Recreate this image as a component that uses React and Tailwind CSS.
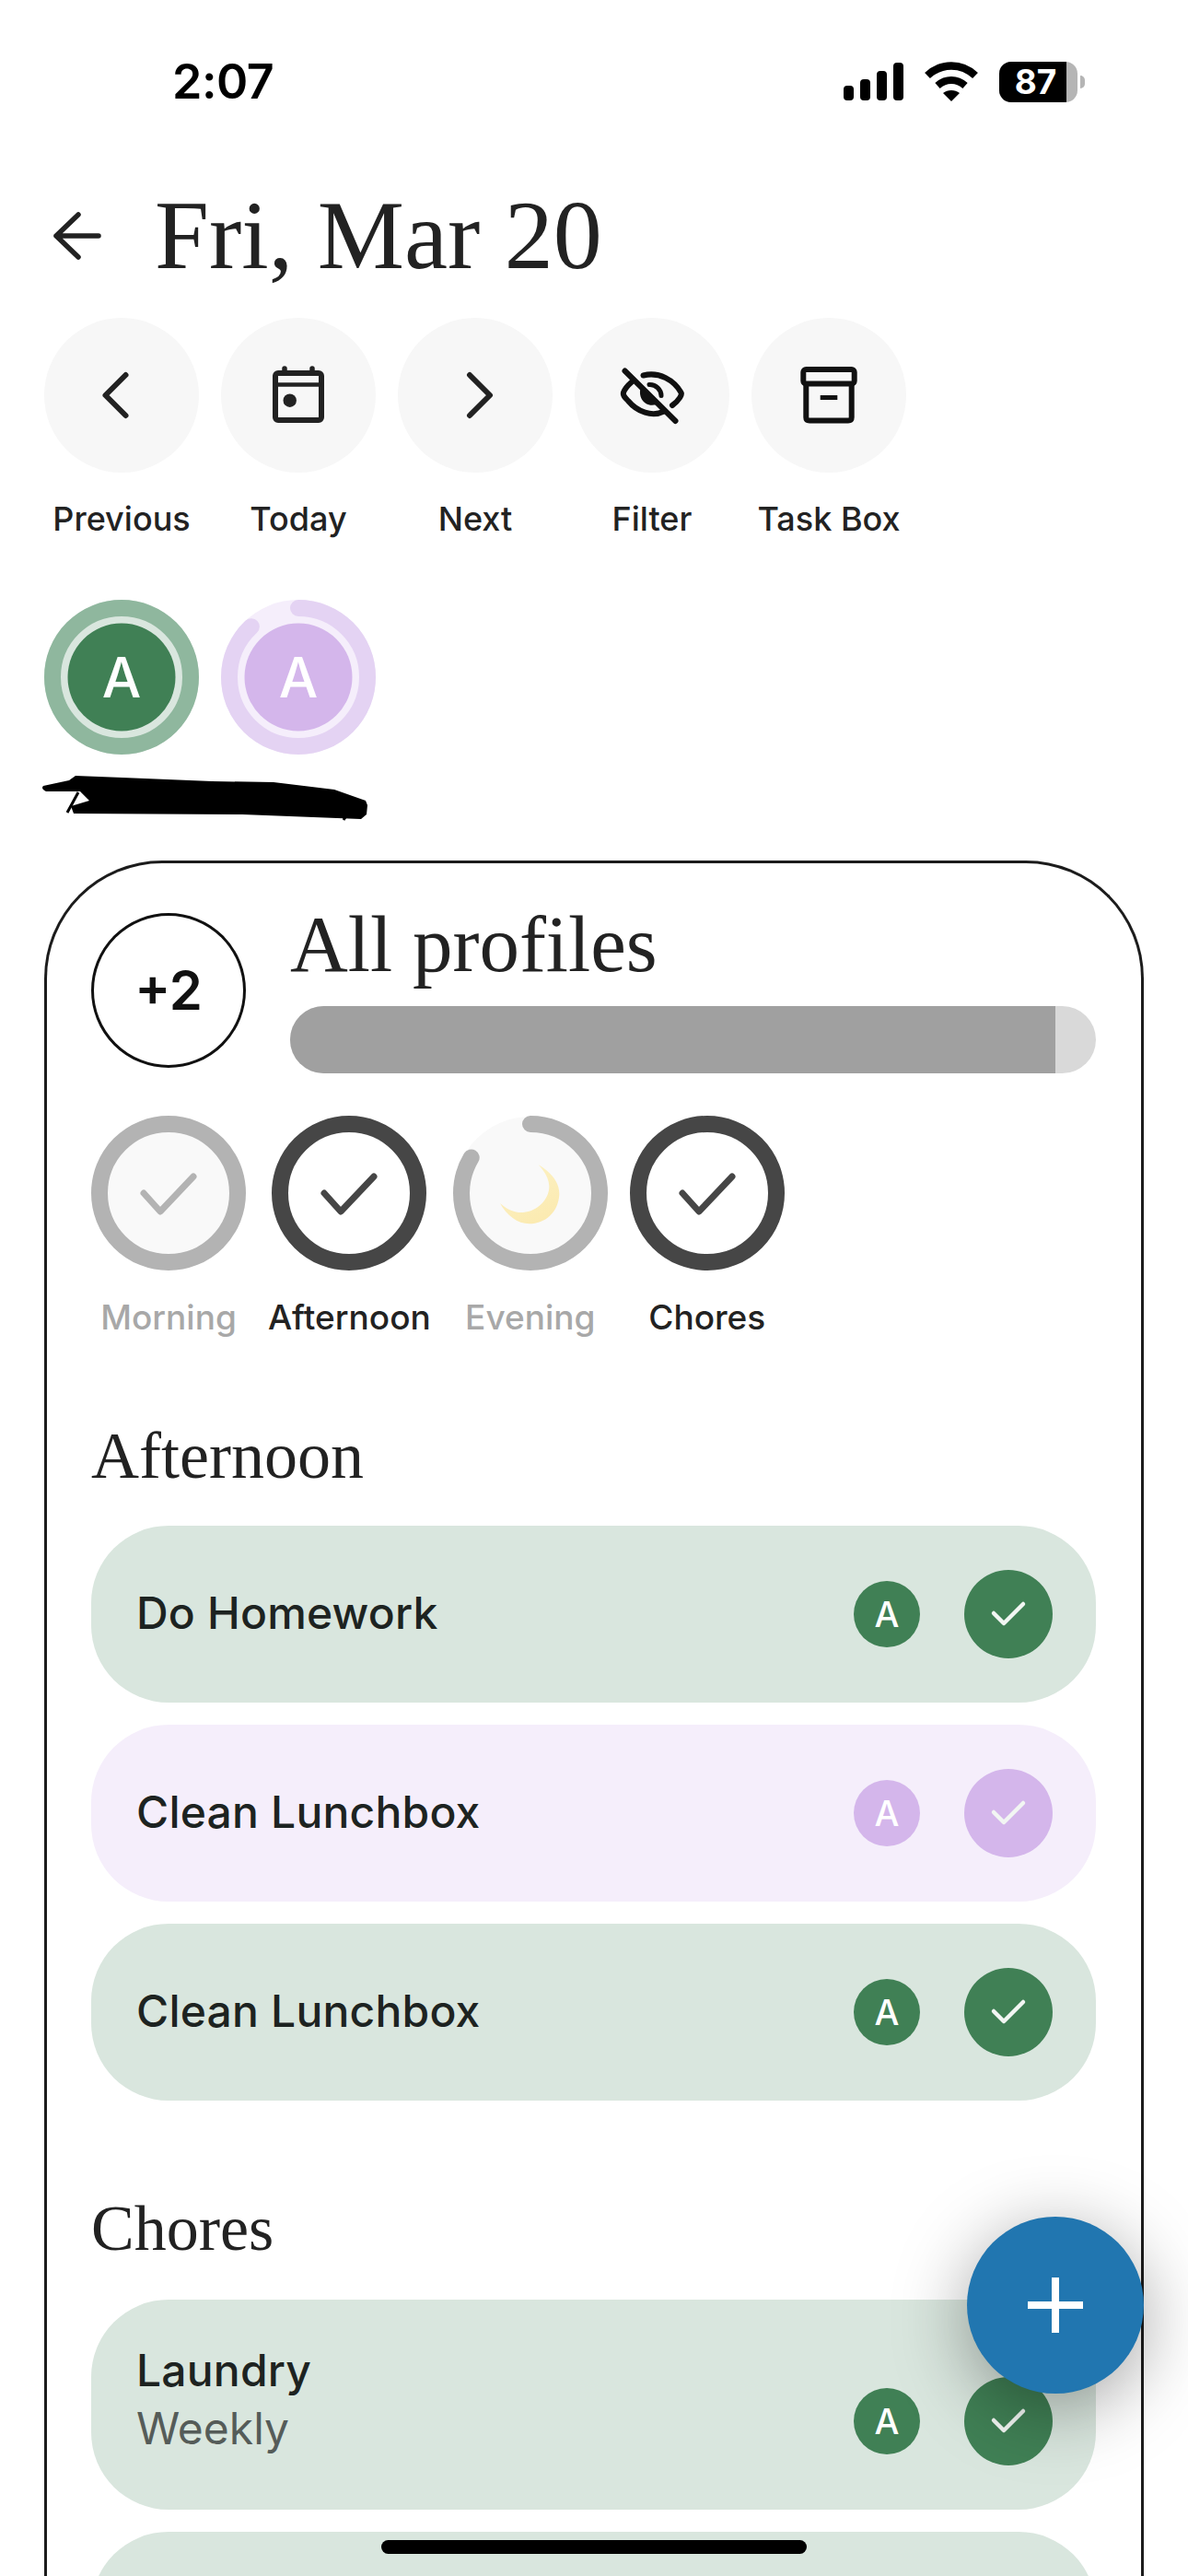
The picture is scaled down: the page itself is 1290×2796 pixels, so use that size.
// Day view: date header, quick actions, profile rings and the task list
import React from 'react';

const sans = "font-['Inter','Noto_Sans',sans-serif]";
const serif = "font-['Liberation_Serif','Times_New_Roman',serif]";

const StatusBar = () => (
  <div className="flex h-[172px] items-center justify-between pl-[187px] pr-[112px] pt-[5px]">
    <span className="text-[52px] font-semibold leading-none tracking-[-0.5px] text-black">2:07</span>
    <div className="flex items-center">
      <div className="flex h-[41px] items-end gap-[7px]">
        <div className="h-[16px] w-[11px] rounded-[4px] bg-black" />
        <div className="h-[23px] w-[11px] rounded-[4px] bg-black" />
        <div className="h-[32px] w-[11px] rounded-[4px] bg-black" />
        <div className="h-[41px] w-[11px] rounded-[4px] bg-black" />
      </div>
      <svg className="ml-[23px]" width="58" height="44" viewBox="0 0 58 44">
        <path d="M3 15 C18 1 40 1 55 15" fill="none" stroke="#000" strokeWidth="8.5" />
        <path d="M14 26 C23 18 35 18 44 26" fill="none" stroke="#000" strokeWidth="8" />
        <path d="M20 34 C25 30 33 30 38 34 L29 43 Z" fill="#000" />
      </svg>
      <div className="ml-[23px] flex h-[44px] w-[85px] overflow-hidden rounded-[13px] bg-[#b5b5b5]">
        <div className="flex w-[73px] items-center justify-center bg-black pl-[6px] text-[37px] font-bold leading-[44px] text-white">87</div>
      </div>
      <div className="ml-[3px] h-[14px] w-[5px] rounded-r-full bg-[#b5b5b5]" />
    </div>
  </div>
);

const PrevIcon = () => (
  <svg width="72" height="72" viewBox="0 0 72 72" fill="none" stroke="#222" strokeWidth="6" strokeLinecap="round" strokeLinejoin="round">
    <path d="M40.5 14 L18.5 36 L40.5 58" />
  </svg>
);

const NextIcon = () => (
  <svg width="72" height="72" viewBox="0 0 72 72" fill="none" stroke="#222" strokeWidth="6" strokeLinecap="round" strokeLinejoin="round">
    <path d="M30 14 L52 36 L30 58" />
  </svg>
);

const CalendarIcon = () => (
  <svg width="72" height="72" viewBox="0 0 72 72" fill="none" stroke="#222">
    <rect x="11" y="12" width="50" height="51" rx="3" strokeWidth="6" />
    <path d="M11 24.5 H61" strokeWidth="4.5" />
    <path d="M21 7 V12 M51 7 V12" strokeWidth="5.5" strokeLinecap="round" />
    <circle cx="26.7" cy="41.7" r="7.2" fill="#222" stroke="none" />
  </svg>
);

const EyeOffIcon = () => (
  <svg width="72" height="72" viewBox="0 0 72 72" fill="none" stroke="#111" strokeWidth="6" strokeLinecap="round" strokeLinejoin="round">
    <path d="M26.5 14.5 C44 10 60 20 67.5 33 C69 35 66 41 58 47" />
    <path d="M13.5 22 C9 26 6 30 5 33 C4 36 7 39 10 42 C20 54 36 60 49 53.5" />
    <path d="M33 24.5 C40 24 46 30 46 36.5" strokeWidth="5" />
    <path d="M24 27 C20 38 28 50 41 46 C42 46 43 45.5 44 45 Z" fill="#111" stroke="none" />
    <path d="M6.5 9.5 L61.5 64" />
  </svg>
);

const ArchiveIcon = () => (
  <svg width="72" height="72" viewBox="0 0 72 72" fill="none" stroke="#111" strokeWidth="6" strokeLinejoin="round">
    <rect x="8.3" y="8" width="55.4" height="15.5" rx="3" />
    <path d="M11.3 23.5 V60 Q11.3 63.5 15 63.5 H57 Q60.7 63.5 60.7 60 V23.5" />
    <path d="M26.7 38.5 H45.3" strokeWidth="5" />
  </svg>
);

const actions = [
  { label: 'Previous', icon: <PrevIcon /> },
  { label: 'Today', icon: <CalendarIcon /> },
  { label: 'Next', icon: <NextIcon /> },
  { label: 'Filter', icon: <EyeOffIcon /> },
  { label: 'Task Box', icon: <ArchiveIcon /> },
];

const ActionButton = ({ label, icon }) => (
  <div className="flex w-[168px] flex-col items-center">
    <div className="flex h-[168px] w-[168px] items-center justify-center rounded-full bg-[#f7f7f7]">{icon}</div>
    <span className="mt-[30px] whitespace-nowrap text-[36px] font-[550] leading-[40px] text-[#222]">{label}</span>
  </div>
);

// Profile avatar with its progress ring; gap is the unfinished share in degrees
const ProfileRing = ({ track, ring, fill, gap }) => (
  <svg width="168" height="168" viewBox="0 0 168 168">
    <circle cx="84" cy="84" r="84" fill={track} />
    <circle
      cx="84"
      cy="84"
      r="75"
      fill="none"
      stroke={ring}
      strokeWidth="18"
      strokeLinecap={gap ? 'round' : 'butt'}
      pathLength="360"
      strokeDasharray={`${360 - gap} 360`}
      transform="rotate(-90 84 84)"
    />
    <circle cx="84" cy="84" r="58.5" fill={fill} />
    <text x="84" y="106" textAnchor="middle" fontSize="60" fontWeight="550" fill="#fff" fontFamily="Inter, sans-serif">A</text>
  </svg>
);

const Scribble = () => (
  <svg className="ml-[-8px] block" width="370" height="56" viewBox="0 0 370 56">
    <path
      d="M7 16 L35 10 L42 5 L93 7 L190 11 L257 12 L323 20 L357 32 L359 37 L358 47 L352 52 L223 47 L40 46 L37 38 L57 32 L47 22 L10 22 Q4 19 7 16 Z"
      fill="#000"
    />
    <path d="M33 45 L45 23 M333 53 L337 47" stroke="#000" strokeWidth="3" />
  </svg>
);

const Moon = () => (
  <>
    <defs>
      <linearGradient id="moonGlow" x1="0.3" y1="0.2" x2="0.7" y2="1">
        <stop offset="0" stopColor="#fcf0c0" />
        <stop offset="1" stopColor="#fbeab0" />
      </linearGradient>
    </defs>
    <path
      d="M92.7 53.3 C108 62 116 74 115.3 86 C114 105 100 117.3 82.7 117.3 C70 117.3 58 108 51 95 C60 103 68 105.5 76 105 C92 104 105 90 104.3 76 C104 68 99 60 92.7 53.3 Z"
      fill="url(#moonGlow)"
    />
  </>
);

// One routine in the strip under the overall progress bar
const RoutineRing = ({ label, color, inner, gap = 0, textColor, moon }) => (
  <div className="flex min-w-[168px] flex-col items-center">
    <svg width="168" height="168" viewBox="0 0 168 168">
      <circle cx="84" cy="84" r="83" fill={inner} />
      <circle
        cx="84"
        cy="84"
        r="75"
        fill="none"
        stroke={color}
        strokeWidth="18"
        strokeLinecap={gap ? 'round' : 'butt'}
        pathLength="360"
        strokeDasharray={`${360 - gap} 360`}
        transform="rotate(-90 84 84)"
      />
      {moon ? (
        <Moon />
      ) : (
        <path d="M57 84 L75 104 L111 66" fill="none" stroke={color} strokeWidth="7" strokeLinecap="round" strokeLinejoin="round" />
      )}
    </svg>
    <span className={`mt-[29px] whitespace-nowrap text-[37px] font-[550] leading-[44px] ${textColor}`}>{label}</span>
  </div>
);

const CheckButton = ({ purple }) => (
  <div className={`flex h-[96px] w-[96px] items-center justify-center rounded-full ${purple ? 'bg-[#d4b6eb]' : 'bg-[#408055]'}`}>
    <svg width="40" height="32" viewBox="0 0 40 32" fill="none" stroke="#f2f6f3" strokeWidth="4.5" strokeLinecap="round" strokeLinejoin="round">
      <path d="M4 15 L15 26 L36 5" />
    </svg>
  </div>
);

const TaskRow = ({ title, sub, purple }) => (
  <div className={`flex justify-between rounded-[84px] pl-[49px] pr-[47px] ${sub ? 'h-[228px]' : 'h-[192px]'} ${purple ? 'bg-[#f5eefb]' : 'bg-[#d9e6de]'}`}>
    <div className={`flex flex-col justify-center ${sub ? 'pb-[12px]' : 'pb-[3px]'}`}>
      <div className="text-[48px] font-[550] leading-[63px] tracking-[0.2px] text-[#1d2321]">{title}</div>
      {sub && <div className="text-[48px] font-normal leading-[63px] text-[#555c59]">{sub}</div>}
    </div>
    <div className="flex items-center gap-[48px] self-end pb-[48px]">
      <div className={`flex h-[72px] w-[72px] items-center justify-center rounded-full text-[38px] font-[550] text-white ${purple ? 'bg-[#d4b6eb]' : 'bg-[#408055]'}`}>A</div>
      <CheckButton purple={purple} />
    </div>
  </div>
);

const App = () => {
  return (
    <div className={`relative h-[2796px] w-[1290px] overflow-hidden bg-white ${sans}`}>
      <StatusBar />

      <div className="flex h-[173px] items-center pb-[5px] pl-[57px]">
        <svg width="56" height="52" viewBox="0 0 56 52" fill="none" stroke="#222" strokeWidth="5.5" strokeLinecap="round" strokeLinejoin="round">
          <path d="M28 3 L4 26 L28 49 M4 26 H50" />
        </svg>
        <h1 className={`ml-[55px] text-[106px] font-normal leading-none text-[#222] ${serif}`}>Fri, Mar 20</h1>
      </div>

      <div className="flex gap-[24px] px-[48px]">
        {actions.map((a) => (
          <ActionButton key={a.label} {...a} />
        ))}
      </div>

      <div className="mt-[68px] flex gap-[24px] px-[48px]">
        <ProfileRing track="#d9e6de" ring="#8fb79e" fill="#408055" gap={0} />
        <ProfileRing track="#f5eefb" ring="#e4d3f3" fill="#d4b6eb" gap={43} />
      </div>
      <div className="mt-[18px] h-[56px] px-[48px]">
        <Scribble />
      </div>

      <div className="mx-[48px] mt-[41px] rounded-t-[128px] border-[3px] border-b-0 border-[#1c1c1c] pl-[48px] pr-[49px] pt-[54px]">
        <div className="flex gap-[48px]">
          <div className="flex h-[168px] w-[168px] shrink-0 items-center justify-center rounded-full border-[3px] border-[#111] text-[58px] font-semibold text-[#111]">+2</div>
          <div className="min-w-0 flex-1">
            <h2 className={`h-[101px] text-[87px] font-normal leading-[68px] text-[#222] ${serif}`}>All profiles</h2>
            <div className="h-[73px] overflow-hidden rounded-full bg-[#d9d9d9]">
              <div className="h-full w-[95%] bg-[#a0a0a0]" />
            </div>
          </div>
        </div>

        <div className="mt-[46px] flex gap-[24px]">
          <RoutineRing label="Morning" color="#b3b3b3" inner="#f9f9f9" textColor="text-[#a8a8a8]" />
          <RoutineRing label="Afternoon" color="#464646" inner="#ffffff" textColor="text-[#222]" />
          <RoutineRing label="Evening" color="#b3b3b3" inner="#f9f9f9" gap={59} textColor="text-[#a8a8a8]" moon />
          <RoutineRing label="Chores" color="#464646" inner="#ffffff" textColor="text-[#222]" />
        </div>

        <h3 className={`mt-[88px] text-[72px] font-normal leading-[80px] text-[#222] ${serif}`}>Afternoon</h3>
        <div className="mt-[36px] flex flex-col gap-[24px]">
          <TaskRow title="Do Homework" />
          <TaskRow title="Clean Lunchbox" purple />
          <TaskRow title="Clean Lunchbox" />
        </div>

        <h3 className={`mt-[99px] text-[70px] font-normal leading-[80px] text-[#222] ${serif}`}>Chores</h3>
        <div className="mt-[37px] flex flex-col gap-[24px]">
          <TaskRow title="Laundry" sub="Weekly" />
          <div className="h-[192px] rounded-[84px] bg-[#d9e6de]" />
        </div>
      </div>

      {/* add-task button floats over the list */}
      <button className="absolute bottom-[198px] right-[48px] flex h-[192px] w-[192px] items-center justify-center rounded-full bg-[#2176b0] shadow-[0_16px_80px_rgba(0,0,0,0.36)]">
        <svg width="60" height="60" viewBox="0 0 60 60" fill="#fff">
          <rect x="0" y="26" width="60" height="8" />
          <rect x="26" y="0" width="8" height="60" />
        </svg>
      </button>

      <div className="absolute bottom-[24px] left-[414px] h-[15px] w-[462px] rounded-full bg-black" />
    </div>
  );
};

export default App;
